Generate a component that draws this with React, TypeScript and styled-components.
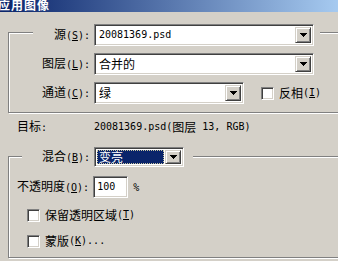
import React from "react";
import styled, { createGlobalStyle } from "styled-components";

const GlobalStyle = createGlobalStyle`
  body {
    margin: 0;
    background: #d4d0c8;
  }
`;

const Window = styled.div`
  width: 338px;
  height: 261px;
  overflow: hidden;
  background: #d4d0c8;
  color: #000;
  font-family: "Noto Sans CJK SC", sans-serif;
  font-size: 12px;
  line-height: 14px;
  display: flex;
  flex-direction: column;
`;

const TitleBar = styled.div`
  flex: none;
  height: 12px;
  overflow: hidden;
  background: linear-gradient(to right, #0a246a, #a6caf0);
  color: #fff;
  font-weight: bold;
  line-height: 12px;
`;

const TitleText = styled.div`
  margin: -1px 0 0 -2px;
  letter-spacing: 1px;
`;

const GroupBox = styled.div<{ $top: number; $height: number }>`
  flex: none;
  box-sizing: border-box;
  margin: ${(p) => p.$top}px 0 0 8px;
  width: 340px;
  height: ${(p) => p.$height}px;
  border: 1px solid #808080;
  box-shadow: inset 1px 1px 0 #fff, 1px 1px 0 #fff;
  display: flex;
  flex-direction: column;
  align-items: flex-start;
`;

const Row = styled.div<{ $height: number; $top: number; $left: number }>`
  flex: none;
  display: flex;
  align-items: center;
  height: ${(p) => p.$height}px;
  margin: ${(p) => p.$top}px 0 0 ${(p) => p.$left}px;
  white-space: nowrap;
`;

const HeaderRow = styled(Row)<{ $padRight: number }>`
  background: #d4d0c8;
  padding-right: ${(p) => p.$padRight}px;
`;

const Label = styled.div<{ $width?: number }>`
  flex: none;
  width: ${(p) => (p.$width ? `${p.$width}px` : "auto")};
  text-align: right;
  margin-right: 4px;
`;

const PlainLabel = styled.div<{ $width: number }>`
  flex: none;
  width: ${(p) => p.$width}px;
`;

const Lat = styled.span`
  font-family: "DejaVu Sans Mono", monospace;
  font-size: 10px;
  white-space: pre;
`;

const Sunken = styled.div<{ $w: number; $h: number }>`
  flex: none;
  box-sizing: border-box;
  width: ${(p) => p.$w}px;
  height: ${(p) => p.$h}px;
  background: #fff;
  border: 1px solid;
  border-color: #808080 #fff #fff #808080;
  box-shadow: inset 1px 1px 0 #404040, inset -1px -1px 0 #d4d0c8;
  display: flex;
  align-items: stretch;
  padding: 2px;
`;

const ComboText = styled.div<{ $selected?: boolean }>`
  flex: 1;
  display: flex;
  align-items: center;
  padding-left: 2px;
  margin-right: 1px;
  background: ${(p) => (p.$selected ? "#0a246a" : "transparent")};
  color: ${(p) => (p.$selected ? "#fff" : "#000")};
  outline: ${(p) => (p.$selected ? "1px dotted #c8c4a0" : "none")};
  outline-offset: -1px;
`;

const DropButton = styled.div`
  flex: none;
  box-sizing: border-box;
  width: 16px;
  background: #d4d0c8;
  border: 1px solid;
  border-color: #d4d0c8 #404040 #404040 #d4d0c8;
  box-shadow: inset 1px 1px 0 #fff, inset -1px -1px 0 #808080;
  display: flex;
  align-items: center;
  justify-content: center;
`;

const Check = styled.div<{ $gap?: number }>`
  flex: none;
  box-sizing: border-box;
  width: 13px;
  height: 13px;
  background: #fff;
  border: 1px solid;
  border-color: #808080 #fff #fff #808080;
  box-shadow: inset 1px 1px 0 #404040, inset -1px -1px 0 #d4d0c8;
  margin-left: ${(p) => p.$gap ?? 0}px;
  margin-right: 5px;
`;

const InputText = styled.div`
  display: flex;
  align-items: center;
  padding-left: 1px;
`;

const Percent = styled.div`
  margin-left: 5px;
`;

// "&X" underlines X; ascii runs use the narrow half-width font
const mnemonic = (s: string) =>
  s.split(/(&.)/).map((p, i) =>
    p.startsWith("&") ? <u key={i}>{p.slice(1)}</u> : p
  );

const Txt: React.FC<{ s: string }> = ({ s }) => (
  <>
    {s
      .split(/([\x20-\x7e]+)/)
      .filter(Boolean)
      .map((p, i) =>
        /^[\x20-\x7e]+$/.test(p) ? (
          <Lat key={i}>{mnemonic(p)}</Lat>
        ) : (
          <span key={i}>{p}</span>
        )
      )}
  </>
);

const Arrow = () => (
  <svg width="7" height="4" viewBox="0 0 7 4" shapeRendering="crispEdges">
    <polygon points="0,0 7,0 3.5,4" fill="#000" />
  </svg>
);

const Combo: React.FC<{ w: number; h: number; value: string; selected?: boolean }> = ({
  w,
  h,
  value,
  selected,
}) => (
  <Sunken $w={w} $h={h}>
    <ComboText $selected={selected}>
      <Txt s={value} />
    </ComboText>
    <DropButton>
      <Arrow />
    </DropButton>
  </Sunken>
);

const App: React.FC = () => {
  return (
    <Window>
      <GlobalStyle />
      <TitleBar>
        <TitleText>应用图像</TitleText>
      </TitleBar>

      <GroupBox $top={20} $height={81}>
        <HeaderRow $height={22} $top={-9} $left={24} $padRight={6}>
          <Label $width={57}>
            <Txt s="源(&S):" />
          </Label>
          <Combo w={220} h={22} value="20081369.psd" />
        </HeaderRow>
        <Row $height={22} $top={7} $left={24}>
          <Label $width={57}>
            <Txt s="图层(&L):" />
          </Label>
          <Combo w={220} h={22} value="合并的" />
        </Row>
        <Row $height={22} $top={7} $left={24}>
          <Label $width={57}>
            <Txt s="通道(&C):" />
          </Label>
          <Combo w={150} h={22} value="绿" />
          <Check $gap={17} />
          <Txt s="反相(&I)" />
        </Row>
      </GroupBox>

      <Row $height={14} $top={7} $left={17}>
        <PlainLabel $width={77}>
          <Txt s="目标:" />
        </PlainLabel>
        <Txt s="20081369.psd(图层 13, RGB)" />
      </Row>

      <GroupBox $top={22} $height={102}>
        <HeaderRow $height={20} $top={-10} $left={13} $padRight={9}>
          <Label $width={68}>
            <Txt s="混合(&B):" />
          </Label>
          <Combo w={90} h={20} value="变亮" selected />
        </HeaderRow>
        <Row $height={22} $top={9} $left={8}>
          <Label>
            <Txt s="不透明度(&O):" />
          </Label>
          <Sunken $w={35} $h={22}>
            <InputText>
              <Txt s="100" />
            </InputText>
          </Sunken>
          <Percent>
            <Txt s="%" />
          </Percent>
        </Row>
        <Row $height={16} $top={9} $left={18}>
          <Check />
          <Txt s="保留透明区域(&T)" />
        </Row>
        <Row $height={16} $top={10} $left={18}>
          <Check />
          <Txt s="蒙版(&K)..." />
        </Row>
      </GroupBox>
    </Window>
  );
};

export default App;
